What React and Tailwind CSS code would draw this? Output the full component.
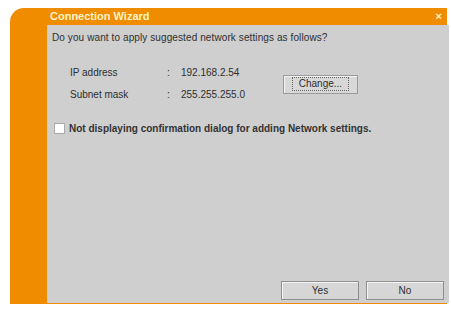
export default function App() {
  const font = { fontFamily: '"Liberation Sans", Arial, sans-serif' };
  return (
    <div className="w-[451px] h-[309px] bg-white pt-[8px] pl-[10px] pr-[4px]" style={font}>
      <div className="h-[296px] bg-[#ef8c00] rounded-tl-[14px] flex flex-col pb-[1px]">
        <div className="h-[17px] flex items-center justify-between pl-[40px] pr-[5px]">
          <span className="text-[11px] font-bold text-[#fff4c8] leading-none">Connection Wizard</span>
          <span className="text-[11px] font-bold text-[#fff4c8] leading-none">×</span>
        </div>
        <div className="ml-[37px] mr-[-2px] flex-1 bg-[#cfcfcf] flex flex-col text-[#2e2e2e] text-[10px] leading-none">
          <div className="pl-[5px] pt-[8px] tracking-[0.1px]">Do you want to apply suggested network settings as follows?</div>
          <div className="flex items-center mt-[25px]">
            <div className="flex flex-col gap-[12px] pl-[23px]">
              <div className="flex">
                <span className="w-[97px]">IP address</span>
                <span className="w-[14px]">:</span>
                <span>192.168.2.54</span>
              </div>
              <div className="flex">
                <span className="w-[97px]">Subnet mask</span>
                <span className="w-[14px]">:</span>
                <span>255.255.255.0</span>
              </div>
            </div>
            <div className="ml-[38px] w-[75px] h-[19px] border border-[#9a9a9a] bg-[#d8d8d8] flex items-center justify-center shadow-[inset_1px_1px_0_#f4f4f4]">
              <span className="border border-dotted border-[#666] px-[6px] py-[1px]">Change...</span>
            </div>
          </div>
          <div className="flex items-center mt-[23px] pl-[7px]">
            <div className="w-[11px] h-[11px] bg-white border border-[#aaa]" />
            <span className="ml-[4px] font-bold text-[#333]">Not displaying confirmation dialog for adding Network settings.</span>
          </div>
          <div className="flex-1" />
          <div className="flex justify-end gap-[7px] pr-[5px] pb-[3px]">
            <div className="w-[78px] h-[19px] border border-[#8e8e8e] bg-[#d6d6d6] shadow-[inset_1px_1px_0_#f6f6f6] flex items-center justify-center">Yes</div>
            <div className="w-[78px] h-[19px] border border-[#8e8e8e] bg-[#d6d6d6] shadow-[inset_1px_1px_0_#f6f6f6] flex items-center justify-center">No</div>
          </div>
        </div>
      </div>
    </div>
  );
}
